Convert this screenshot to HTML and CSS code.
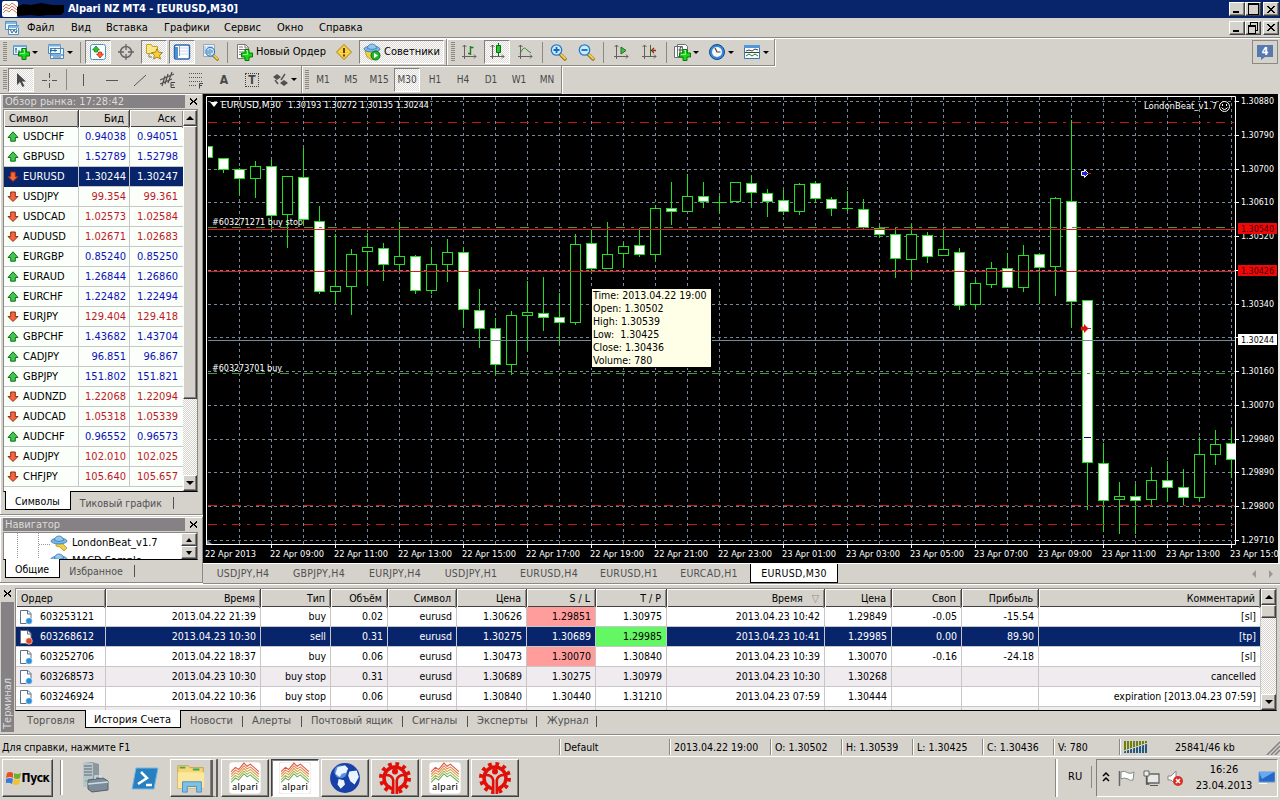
FILE: index.html
```html
<!DOCTYPE html>
<html lang="ru">
  <head>
    <meta charset="UTF-8" />
    <title>Alpari NZ MT4 - [EURUSD,M30]</title>
    <link rel="stylesheet" href="styles.css" />
  </head>
  <body>
    <svg class="sprite" aria-hidden="true">
      <symbol id="plus" viewBox="0 0 12 12">
        <path d="M4 .5h4V4h3.500v4H8v3.500H4V8H.5V4H4z" fill="#18d818" stroke="#087808" />
        <path d="M5 1.500h1.500v4H2" fill="none" stroke="#8f8" />
      </symbol>
      <symbol id="i-newchart" viewBox="0 0 18 18">
        <path d="M1.500 2.500h13v9h-13z" fill="#e8f4fc" stroke="#4888b8" />
        <path d="M1 3h14" stroke="#68a8d8" stroke-width="2" />
        <path d="M4 5v5M7 7v3M3 6h2M10 5v4" stroke="#286898" />
        <use href="#plus" x="6" y="5" width="12" height="12" />
      </symbol>
      <symbol id="i-profiles" viewBox="0 0 18 18">
        <path d="M3.500 5.500h13v10h-13zM1.500 1.500h12v9h-12z" fill="#f0f8ff" stroke="#4888c0" />
        <path d="M1 2.500h13M4 12h12" stroke="#78b0e0" stroke-width="2" />
        <path d="M4 5v4M3 7.500h7M8 5v4M6 14h8" stroke="#386890" />
      </symbol>
      <symbol id="i-market" viewBox="0 0 18 18">
        <rect x="1.500" y="1.500" width="15" height="15" rx="2" fill="#fff" stroke="#4898d0" />
        <path d="M7 3l3.500 4h-2v2h-3v-2h-2z" fill="#28c828" stroke="#087808" stroke-width=".7" />
        <path d="M11 15l-3.500-4h2v-2h3v2h2z" fill="#f86838" stroke="#b02008" stroke-width=".7" />
      </symbol>
      <symbol id="i-target" viewBox="0 0 18 18">
        <circle cx="9" cy="9" r="5.500" fill="none" stroke="#666" stroke-width="1.500" />
        <path d="M9 1v6M9 11v6M1 9h6M11 9h6" stroke="#666" stroke-width="1.300" />
      </symbol>
      <symbol id="star" viewBox="0 0 12 12">
        <path d="M6 .7l1.600 3.500 3.900.4-2.900 2.600.8 3.900L6 9.200l-3.400 1.900.8-3.900L.5 4.600l3.900-.4z" fill="#f8d030" stroke="#987010" stroke-width=".8" />
      </symbol>
      <symbol id="i-navigator" viewBox="0 0 18 18">
        <path d="M1.500 10.500v-9h5l1 2h5v7z" fill="#fce888" stroke="#c8a028" />
        <path d="M4 11v3h3" fill="none" stroke="#777" />
        <use href="#star" x="6" y="5" width="12" height="12" />
      </symbol>
      <symbol id="i-terminal" viewBox="0 0 18 18">
        <rect x="1.500" y="2" width="15" height="14" rx="1.500" fill="#fff" stroke="#2868b0" stroke-width="1.500" />
        <path d="M2 4h3v11H2z" fill="#4890d8" />
        <path d="M7 5h8M7 8h8M7 11h8" stroke="#c4d8ec" />
        <path d="M6 4h1M6 6h1M6 8h1M6 10h1M6 12h1" stroke="#345" />
      </symbol>
      <symbol id="lens" viewBox="0 0 18 18">
        <path d="M11 11l5 5" stroke="#987020" stroke-width="3.500" stroke-linecap="round" />
        <path d="M11.500 11l4.500 4.500" stroke="#f0d048" stroke-width="2" stroke-linecap="round" />
        <circle cx="7.500" cy="7" r="5.200" fill="#c8ecff" stroke="#2878c8" stroke-width="1.300" />
      </symbol>
      <symbol id="i-tester" viewBox="0 0 18 18">
        <path d="M2.500 1.500h11v12h-11z" fill="#f0f4f8" stroke="#98a8b8" />
        <path d="M4 3v8M6 4h6" stroke="#98b8d8" />
        <use href="#lens" x="3" y="3" width="15" height="15" />
        <path d="M7 7v4M9 6v6M11 7v3" stroke="#4870a8" />
      </symbol>
      <symbol id="i-order" viewBox="0 0 18 18">
        <path d="M2.500 1.500h8l3 3v11h-11z" fill="#fff" stroke="#777" />
        <path d="M10 1v4h4M4 4h4M4 6.500h7M4 9h6M4 11.500h4" fill="none" stroke="#777" />
        <use href="#plus" x="6" y="6" width="12" height="12" />
      </symbol>
      <symbol id="i-warn" viewBox="0 0 18 18">
        <path d="M9 1.500L16.500 9 9 16.500 1.500 9z" fill="#f8d040" stroke="#a88018" stroke-linejoin="round" />
        <path d="M9 5v5M9 11.500v2" stroke="#604000" stroke-width="2" />
      </symbol>
      <symbol id="hat" viewBox="0 0 18 18">
        <path d="M6 8l6 1 5 5-3 3-4-4-4-1z" fill="#f0d048" stroke="#b89020" stroke-width=".8" />
        <ellipse cx="9" cy="7" rx="8" ry="3" fill="#78b8e8" stroke="#3878b0" stroke-width=".8" />
        <path d="M4.500 6.500c0-6 9-6 9 0q-4.500 2-9 0z" fill="#90c8f0" stroke="#3878b0" stroke-width=".8" />
      </symbol>
      <symbol id="i-expert" viewBox="0 0 18 18">
        <path d="M2 8l2 6 5 3 6-4-1-5z" fill="#f0d048" stroke="#b89020" stroke-width=".8" />
        <ellipse cx="9" cy="6" rx="8" ry="3" fill="#78b8e8" stroke="#3878b0" stroke-width=".8" />
        <path d="M4.500 5.500c0-6 9-6 9 0q-4.500 2-9 0z" fill="#90c8f0" stroke="#3878b0" stroke-width=".8" />
        <circle cx="12.500" cy="12.500" r="4.500" fill="#20b828" stroke="#087010" />
        <path d="M11 10l4 2.500-4 2.500z" fill="#fff" />
      </symbol>
      <symbol id="axes" viewBox="0 0 18 18">
        <path d="M4.500 2v14M2 13.500h14M2.500 4l2-2 2 2M14 11.500l2 2-2 2" fill="none" stroke="#686060" />
      </symbol>
      <symbol id="i-bars" viewBox="0 0 18 18">
        <use href="#axes" width="18" height="18" />
        <path d="M10.500 3v9M8 10.500h2.500M10.500 4.500h3" fill="none" stroke="#188018" stroke-width="1.400" />
      </symbol>
      <symbol id="i-candles" viewBox="0 0 18 18">
        <use href="#axes" width="18" height="18" />
        <path d="M10.500 0v13" stroke="#087008" />
        <path d="M8.500 2.500h4v7h-4z" fill="#20c838" stroke="#087008" />
      </symbol>
      <symbol id="i-line" viewBox="0 0 18 18">
        <use href="#axes" width="18" height="18" />
        <path d="M4 11c3-7 5-7 7-4l4 3" fill="none" stroke="#388838" />
      </symbol>
      <symbol id="i-zoomin" viewBox="0 0 18 18">
        <use href="#lens" width="18" height="18" />
        <path d="M4.500 7h6M7.500 4v6" stroke="#1868b8" stroke-width="1.800" />
      </symbol>
      <symbol id="i-zoomout" viewBox="0 0 18 18">
        <use href="#lens" width="18" height="18" />
        <path d="M4.500 7h6" stroke="#1868b8" stroke-width="1.800" />
      </symbol>
      <symbol id="i-scroll" viewBox="0 0 18 18">
        <use href="#axes" width="18" height="18" />
        <path d="M9 4l5 3.500L9 11z" fill="#50b850" stroke="#187818" />
      </symbol>
      <symbol id="i-shift" viewBox="0 0 18 18">
        <use href="#axes" width="18" height="18" />
        <path d="M10.500 2v11" stroke="#207820" />
        <path d="M16 7.500h-4M14 5l-2.500 2.500L14 10" fill="none" stroke="#983020" stroke-width="1.300" />
      </symbol>
      <symbol id="i-indicator" viewBox="0 0 18 18">
        <path d="M1.500 3.500h8v11h-8zM4.500 1.500h8l2 2v10h-10z" fill="#fff" stroke="#687078" />
        <path d="M9 4q-2-1-2 2v5M5.500 7H9" fill="none" stroke="#444" />
        <use href="#plus" x="6" y="6" width="12" height="12" />
      </symbol>
      <symbol id="i-clock" viewBox="0 0 18 18">
        <circle cx="9" cy="9" r="7.500" fill="#3888d8" stroke="#0c4890" />
        <circle cx="9" cy="9" r="5" fill="#f4faff" />
        <path d="M7 5l2 4h3.500" fill="none" stroke="#604020" stroke-width="1.200" />
      </symbol>
      <symbol id="i-template" viewBox="0 0 18 18">
        <path d="M1.500 2.500h15v13h-15z" fill="#fff" stroke="#3878b0" />
        <path d="M1 3.500h16" stroke="#5098d8" stroke-width="3" />
        <path d="M3 8l3-1 3 1 3-2 3 1M2 9.500h14" fill="none" stroke="#345" />
        <path d="M3 13l3-2 3 2 3-2 3 2" fill="none" stroke="#287828" />
      </symbol>
      <symbol id="i-cursor" viewBox="0 0 18 18">
        <path d="M5 2v12l3-3 2.500 5 2-1L10 10.500h4z" fill="#484848" />
      </symbol>
      <symbol id="i-cross" viewBox="0 0 18 18">
        <path d="M9.500 2v5M9.500 12v5M2 9.500h5M12 9.500h5M9 9.500h1" stroke="#555" />
      </symbol>
      <symbol id="i-vline" viewBox="0 0 18 18"><path d="M8.500 3v12" stroke="#555" /></symbol>
      <symbol id="i-hline" viewBox="0 0 18 18"><path d="M3 9.500h12" stroke="#555" /></symbol>
      <symbol id="i-trend" viewBox="0 0 18 18"><path d="M3 15L15 4" stroke="#555" /></symbol>
      <symbol id="i-channel" viewBox="0 0 18 18">
        <path d="M1 9l14-6M1 13l12-5M3 15l3-10M6 13l3-10M9 12l4-11" stroke="#505050" stroke-width="1.200" />
        <path d="M16 11.500h-4v5h4M12 14h3" fill="none" stroke="#444" />
      </symbol>
      <symbol id="i-fibo" viewBox="0 0 18 18">
        <path d="M2 2.500h14M2 6.500h14M2 10.500h14M2 14.500h8" stroke="#555" stroke-dasharray="1 1" />
        <path d="M16 12.500h-3.500v5M12.500 14.500H15" fill="none" stroke="#444" />
      </symbol>
      <symbol id="i-arrows" viewBox="0 0 18 18">
        <path d="M2 6l4-3 4 3-4 3zM9 12l4-3 4 3-4 3z" fill="#505050" />
        <path d="M4 9l3 4M10 9l4-6" fill="none" stroke="#555" stroke-width="1.500" />
      </symbol>
      <symbol id="i-up" viewBox="0 0 12 12">
        <path d="M6 .8L11 6.500H8.300v3.700H3.700V6.500H1z" fill="#40c850" stroke="#107018" />
      </symbol>
      <symbol id="i-down" viewBox="0 0 12 12">
        <path d="M6 10.500L1 5.500h2.700V1h4.600v4.500H11z" fill="#f06840" stroke="#982810" />
      </symbol>
      <symbol id="doc" viewBox="0 0 14 16">
        <path d="M1.500 1.500h7.500l3 3v10H1.500z" fill="#fff" stroke="#607080" />
        <path d="M8.500 1.500v3.500H12" fill="none" stroke="#607080" />
      </symbol>
      <symbol id="i-alpari" viewBox="0 0 30 30">
        <rect width="30" height="30" rx="3" fill="#fff" stroke="#c8c8c8" stroke-width=".5" />
        <g fill="none" stroke-width="1">
          <path d="M2 9l4-4 3 2 5-6 3 3 3-2 8 7" stroke="#e05040" />
          <path d="M2 11.500l4-4 3 2 5-6 3 3 3-2 8 7" stroke="#e88048" />
          <path d="M2 14l4-4 3 2 5-6 3 3 3-2 8 7" stroke="#d8a048" />
          <path d="M2 16.500l4-4 3 2 5-6 3 3 3-2 8 7" stroke="#a8b850" />
          <path d="M2 19l4-4 3 2 5-6 3 3 3-2 8 7" stroke="#68b058" />
        </g>
        <text x="3" y="26" class="logo-text" textLength="24">alpari</text>
      </symbol>
      <symbol id="i-gear" viewBox="0 0 32 32">
        <circle cx="16" cy="16" r="14" fill="none" stroke="#e01008" stroke-width="4" stroke-dasharray="3.665 3.665" />
        <circle cx="16" cy="16" r="11" fill="none" stroke="#e01008" stroke-width="3.500" />
        <path d="M14 19h4v13h-4z" fill="#d5d2cc" />
        <circle cx="16" cy="9.500" r="3" fill="#e01008" />
        <path d="M7 13q6 0 7.200 5v14M25 13q-6 0-7.200 5v14" fill="none" stroke="#e01008" stroke-width="2.600" />
      </symbol>
    </svg>

    <header class="titlebar">
      <svg class="app-icon" viewBox="0 0 66 18">
        <rect x="2" y="1" width="16" height="16" rx="2" fill="#fff" />
        <path d="M3 7l3-3 3 2 3-3 5 4M3 10l3-3 3 2 3-3 5 4M3 13l3-3 3 2 3-3 5 4" fill="none" stroke="#d87850" />
        <path d="M17 7l6-3 8 1 10-2 12 2 11 0v7l-3 3-13 0-9 1-8-1-14 1v-4z" />
      </svg>
      <span>Alpari NZ MT4 - [EURUSD,M30]</span>
      <div class="winbtns">
        <button class="winbtn winbtn--min"></button><button class="winbtn winbtn--max"></button><button class="winbtn winbtn--close"></button>
      </div>
    </header>

    <nav class="menubar">
      <svg class="menubar__icon" viewBox="0 0 16 16">
        <path d="M1.500 1.500h11v8h-11zM4.500 5.500h10v9h-10z" fill="#f0f8ff" stroke="#5090c8" />
        <path d="M5 7h10M2 3h10" stroke="#88b8e0" stroke-width="2" /><path d="M6 9l2 4 2-3 2 3 1-3" fill="none" stroke="#467" />
      </svg>
      <span class="m1">Файл</span><span class="m2">Вид</span><span class="m3">Вставка</span><span class="m4">Графики</span>
      <span class="m5">Сервис</span><span class="m6">Окно</span><span class="m7">Справка</span>
      <div class="winbtns">
        <button class="winbtn winbtn--min"></button><button class="winbtn winbtn--restore"></button><button class="winbtn winbtn--close"></button>
      </div>
    </nav>

    <div class="toolbars">
      <div class="toolbar">
        <div class="band band--main">
          <i class="grip"></i>
          <a class="tb tb--drop"><svg><use href="#i-newchart" /></svg></a>
          <a class="tb tb--drop"><svg><use href="#i-profiles" /></svg></a>
          <i class="sep"></i>
          <a class="tb tb--on"><svg><use href="#i-market" /></svg></a>
          <a class="tb"><svg><use href="#i-target" /></svg></a>
          <a class="tb tb--on"><svg><use href="#i-navigator" /></svg></a>
          <a class="tb tb--on"><svg><use href="#i-terminal" /></svg></a>
          <a class="tb"><svg><use href="#i-tester" /></svg></a>
          <i class="sep"></i>
          <a class="tb tb--order"><svg><use href="#i-order" /></svg><span>Новый Ордер</span></a>
          <a class="tb"><svg><use href="#i-warn" /></svg></a>
          <a class="tb tb--on tb--expert"><svg><use href="#i-expert" /></svg><span>Советники</span></a>
        </div>
        <div class="band band--charts">
          <i class="grip"></i>
          <a class="tb"><svg><use href="#i-bars" /></svg></a>
          <a class="tb tb--on"><svg><use href="#i-candles" /></svg></a>
          <a class="tb"><svg><use href="#i-line" /></svg></a>
          <i class="sep sep--thin"></i>
          <a class="tb"><svg><use href="#i-zoomin" /></svg></a>
          <a class="tb"><svg><use href="#i-zoomout" /></svg></a>
          <i class="sep"></i>
          <a class="tb"><svg><use href="#i-scroll" /></svg></a>
          <a class="tb"><svg><use href="#i-shift" /></svg></a>
          <i class="sep sep--thin"></i>
          <a class="tb tb--drop"><svg><use href="#i-indicator" /></svg></a>
          <a class="tb tb--drop"><svg><use href="#i-clock" /></svg></a>
          <a class="tb tb--drop"><svg><use href="#i-template" /></svg></a>
        </div>
        <div class="notice"><span>4</span></div>
      </div>
      <div class="toolbar toolbar--second">
        <div class="band band--draw">
          <i class="grip"></i>
          <a class="tb tb--on"><svg><use href="#i-cursor" /></svg></a>
          <a class="tb"><svg><use href="#i-cross" /></svg></a>
          <i class="sep"></i>
          <a class="tb"><svg><use href="#i-vline" /></svg></a>
          <a class="tb"><svg><use href="#i-hline" /></svg></a>
          <a class="tb"><svg><use href="#i-trend" /></svg></a>
          <a class="tb"><svg><use href="#i-channel" /></svg></a>
          <a class="tb"><svg><use href="#i-fibo" /></svg></a>
          <a class="tb tb--glyph">A</a>
          <a class="tb tb--glyph tb--label">T</a>
          <a class="tb tb--drop"><svg><use href="#i-arrows" /></svg></a>
        </div>
        <div class="band band--period">
          <i class="grip"></i>
          <a class="tb">M1</a><a class="tb">M5</a><a class="tb">M15</a><a class="tb tb--on">M30</a><a class="tb">H1</a>
          <a class="tb">H4</a><a class="tb">D1</a><a class="tb">W1</a><a class="tb">MN</a>
        </div>
      </div>
    </div>

    <main class="main">
      <aside class="side">
        <section class="panel panel--market">
          <div class="panel__head"><span>Обзор рынка: 17:28:42</span><b class="x"></b></div>
          <div class="panel__body">
            <div class="quotes">
              <div class="quote quote--head"><span>Символ</span><span>Бид</span><span>Аск</span></div>
              <div id="quotes"></div>
            </div>
            <div class="scroll"><i class="scroll__up"></i><i class="scroll__thumb"></i><i class="scroll__down"></i></div>
          </div>
          <div class="tabs"><span class="tab tab--on">Символы</span><span class="tab">Тиковый график</span></div>
        </section>
        <section class="panel panel--nav">
          <div class="panel__head"><span>Навигатор</span><b class="x"></b></div>
          <div class="panel__body">
            <div class="tree">
              <div class="tree__item"><svg><use href="#hat" /></svg>LondonBeat_v1.7</div>
              <div class="tree__item"><svg><use href="#hat" /></svg>MACD Sample</div>
            </div>
            <div class="scroll"><i class="scroll__up"></i><i class="scroll__down"></i></div>
          </div>
          <div class="tabs"><span class="tab tab--on">Общие</span><span class="tab">Избранное</span></div>
        </section>
      </aside>
      <section class="workspace">
        <div class="chart">
          <svg id="chart" viewBox="204 94 1074 469"></svg>
          <div class="tip">
            <div>Time: 2013.04.22 19:00</div><div>Open: 1.30502</div><div>High: 1.30539</div>
            <div>Low: &nbsp;1.30425</div><div>Close: 1.30436</div><div>Volume: 780</div>
          </div>
        </div>
        <div class="chart-tabs">
          <span>USDJPY,H4</span><span>GBPJPY,H4</span><span>EURJPY,H4</span><span>USDJPY,H1</span>
          <span class="wide">EURUSD,H4</span><span class="wide">EURUSD,H1</span><span class="wide">EURCAD,H1</span><span class="on">EURUSD,M30</span>
          <svg class="chart-tabs__nav" viewBox="0 0 24 8"><path d="M5 0v8L1 4zM18 0v8l4-4z" fill="#999" /></svg>
        </div>
      </section>
    </main>

    <section class="terminal">
      <div class="terminal__strip"><b class="x"></b><span>Терминал</span></div>
      <div class="terminal__content">
        <div class="terminal__body">
          <div class="orders" id="orders">
            <div class="order order--head">
              <span>Ордер</span><span>Время</span><span>Тип</span><span>Объём</span><span>Символ</span><span>Цена</span><span>S / L</span>
              <span>T / P</span><span>Время &nbsp; <i>▽</i></span><span>Цена</span><span>Своп</span><span>Прибыль</span><span>Комментарий</span>
            </div>
          </div>
          <div class="scroll"><i class="scroll__up"></i><i class="scroll__thumb"></i><i class="scroll__down"></i></div>
        </div>
        <div class="term-tabs">
          <span class="t1">Торговля</span><span class="t2 on">История Счета</span><span class="t3">Новости</span><span class="t4">Алерты</span>
          <span class="t5">Почтовый ящик</span><span class="t6">Сигналы</span><span class="t7">Эксперты</span><span class="t8">Журнал</span>
        </div>
      </div>
    </section>

    <footer class="status">
      <span class="s0">Для справки, нажмите F1</span><span class="s1">Default</span><span class="s2">2013.04.22 19:00</span>
      <span class="s3">O: 1.30502</span><span class="s3">H: 1.30539</span><span class="s4">L: 1.30425</span><span class="s5">C: 1.30436</span><span class="s6">V: 780</span>
      <span class="s7"><svg class="signal" viewBox="0 0 24 12">
        <path d="M0 6h24" stroke="#6f8010" stroke-width="12" />
        <path d="M0 12v-2L24 2v10z" fill="#245880" /><path d="M0 10L24 2" stroke="#ddd" stroke-width="1" />
        <path d="M2.500 0v12M5.500 0v12M8.500 0v12M11.500 0v12M14.500 0v12M17.500 0v12M20.500 0v12M23.500 0v12" stroke="#d4d0c8" />
      </svg></span>
      <span class="s8">25841/46 kb</span>
      <svg class="resize" viewBox="0 0 14 14"><path d="M1 14L14 1M5 14l9-9M9 14l5-5" stroke="#808080" stroke-width="1.500" /></svg>
    </footer>

    <footer class="taskbar">
      <button class="start">
        <svg viewBox="0 0 16 16"><path d="M1 3q3-2 6 0v5q-3-2-7 0z" fill="#e85020" /><path d="M8 3q3 2 7 0l-1 5q-3 2-6 0z" fill="#70b028" /><path d="M0 9q4-2 7 0l-1 5q-3-2-6-1z" fill="#3878d8" /><path d="M8 9q3 2 6 0l-1 5q-3 2-6 0z" fill="#f8c020" /></svg>
        Пуск
      </button>
      <i class="divider"></i>
      <svg class="quick quick--server" viewBox="0 0 30 32">
        <path d="M3 2l9-1 7 2v22H3z" fill="#8c98a0" /><path d="M3 2h10v24H3z" fill="#b8c4cc" />
        <path d="M4 5h8M4 8h8M4 11h8M4 14h8" stroke="#586870" /><circle cx="6" cy="20" r="1" fill="#6c6" />
        <path d="M8 19l15-2 5 3v9l-16 2-4-3z" fill="#7c8c98" stroke="#546068" /><path d="M8 23l20-2M15 18v-3h6v2" fill="none" stroke="#d0dce4" stroke-width="1.500" />
      </svg>
      <svg class="quick quick--shell" viewBox="0 0 28 24">
        <path d="M5 1h22l-4 21H1z" fill="#2880c0" stroke="#78b8e0" /><path d="M10 5l6 6-9 6M15 18h6" fill="none" stroke="#fff" stroke-width="2.500" />
      </svg>
      <button class="task task--stack">
        <svg viewBox="0 0 34 32"><path d="M3 3h11l2 2h14v22H3z" fill="#f4d878" stroke="#c8a040" /><path d="M5 5h6M19 7h7" stroke="#40a850" stroke-width="2" /><path d="M3 10h28v17H3z" fill="#fce89c" /><path d="M8 31V20h20v11h-5v-6H13v6z" fill="#80c0e8" stroke="#4890c0" /></svg>
      </button>
      <button class="task"><svg><use href="#i-alpari" /></svg></button>
      <button class="task task--on"><svg><use href="#i-alpari" /></svg></button>
      <button class="task">
        <svg viewBox="0 0 30 30"><circle cx="15" cy="15" r="14" fill="#1840a8" /><circle cx="11" cy="9" r="6" fill="#78b0f0" opacity=".7" /><path d="M8 5l7-2 3 3-2 4-4 1-2 3-4-3zM19 9l7-1 2 6-4 7-4-3-2-5zM9 16l5 1 1 4-4 4-3-4z" fill="#e8f4ff" /></svg>
      </button>
      <button class="task"><svg><use href="#i-gear" /></svg></button>
      <button class="task"><svg><use href="#i-alpari" /></svg></button>
      <button class="task"><svg><use href="#i-gear" /></svg></button>
      <div class="tray">
        <span class="lang">RU</span>
        <div class="tray__box">
          <svg class="tray__icons" viewBox="0 0 84 20">
            <path d="M2 8l3-3 3 3M2 13l3-3 3 3" fill="none" stroke="#000" stroke-width="1.500" />
            <path d="M18.500 3v15" stroke="#666" stroke-width="1.500" /><path d="M20 4q4-2 7 1 3 1 6-1l-1 8q-3 1-5-1-4-2-7 0z" fill="#fff" stroke="#888" />
            <path d="M46 6h12v9H46z" fill="#e8e8e8" stroke="#666" stroke-width="1.300" /><path d="M49 17.500h8" stroke="#555" />
            <path d="M43 3h5v5h-5z" fill="#eee" stroke="#666" /><path d="M45.500 8v8h3" fill="none" stroke="#555" stroke-width="1.300" />
            <path d="M67 8h3l5-5v14l-5-5h-3z" fill="#fff" stroke="#888" /><circle cx="77" cy="13" r="5" fill="#d83028" /><path d="M75 11l4 4M79 11l-4 4" stroke="#fff" stroke-width="1.500" />
          </svg>
          <div class="clock"><div>16:26</div><div>23.04.2013</div></div>
          <svg class="desk" viewBox="0 0 17 14"><path d="M1 1h16v10H1z" fill="#2468c8" stroke="#6898c8" /><path d="M1 1h15L4 8z" fill="#68a8f0" /><path d="M1 12.500h8" stroke="#fff" /></svg>
        </div>
      </div>
    </footer>
    <script src="terminal.js"></script>
  </body>
</html>
```
FILE: styles.css
```css
* {
  box-sizing: border-box;
}

body {
  margin: 0;
  width: 1280px;
  height: 800px;
  overflow: hidden;
  display: flex;
  flex-direction: column;
  background: #d5d2cc;
  color: #000;
  font-family: 'DejaVu Sans Condensed', 'DejaVu Sans', sans-serif;
  font-stretch: condensed;
  font-size: 10.5px;
  line-height: 14px;
  white-space: nowrap;
}

i {
  font-style: normal;
}

button {
  font: inherit;
  color: inherit;
  padding: 0;
}

svg {
  flex: none;
  display: block;
}

.sprite {
  position: absolute;
  width: 0;
  height: 0;
}

/* title and menu */
.titlebar {
  height: 18px;
  flex: none;
  display: flex;
  align-items: center;
  background: #08246b;
  color: #fff;
  font-weight: bold;
  font-size: 11px;
  letter-spacing: -.08px;
  padding-right: 1px;
}

.app-icon {
  width: 66px;
  height: 18px;
  margin-right: 2px;
}

.winbtns {
  margin-left: auto;
  display: flex;
}

.winbtn {
  width: 16px;
  height: 14px;
  background: #d5d2cc;
  border: 1px solid;
  border-color: #fff #404040 #404040 #fff;
  box-shadow: inset -1px -1px #808080;
  display: flex;
  align-items: center;
  justify-content: center;
}

.winbtn--close {
  margin-left: 2px;
}

.winbtn--min::before {
  content: '';
  width: 6px;
  height: 2px;
  margin: 6px 3px 0 0;
  background: #000;
}

.winbtn--max::before {
  content: '';
  width: 9px;
  height: 9px;
  border: 1px solid #000;
  border-top-width: 2px;
}

.winbtn--restore::before {
  content: '';
  width: 6px;
  height: 6px;
  margin: 3px 2px 0 0;
  border: 1px solid #000;
  border-top-width: 2px;
  box-shadow: 2px -3px 0 -1px #d5d2cc, 2px -3px #000;
}

.winbtn--close::before,
.x::before {
  content: '';
  width: 8px;
  height: 7px;
  background: linear-gradient(41deg, transparent 43%, #000 43% 57%, transparent 57%),
    linear-gradient(-41deg, transparent 43%, #000 43% 57%, transparent 57%);
}

.menubar {
  height: 20px;
  flex: none;
  display: flex;
  align-items: center;
  padding: 0 1px 0 4px;
  font-size: 11px;
  border-bottom: 1px solid #8c8984;
}

.menubar__icon {
  width: 16px;
  height: 16px;
  margin-right: 7px;
}

.m1 { width: 44px; }
.m2 { width: 35px; }
.m3 { width: 58px; }
.m4 { width: 60px; }
.m5 { width: 53px; }
.m6 { width: 42px; }

/* toolbars */
.toolbars {
  height: 56px;
  flex: none;
  border-top: 1px solid #fff;
}

.toolbar {
  height: 27px;
  display: flex;
}

.toolbar--second {
  height: 28px;
}

.band {
  display: flex;
  align-items: center;
  border: solid #8c8984;
  border-width: 0 1px 1px 0;
  box-shadow: inset 0 1px #fff, 1px 1px #fff;
}

.band--main { width: 447px; padding-left: 3px; }
.band--charts { width: 328px; padding-left: 4px; }
.band--draw { width: 302px; padding-left: 3px; }
.band--period { width: 260px; padding-left: 3px; }

.band--period .tb,
.tb--glyph {
  color: #484848;
  font-size: 10px;
}

.grip {
  width: 4px;
  height: 20px;
  flex: none;
  background: repeating-linear-gradient(#8c8984 0 1px, transparent 1px 2px);
}

.sep {
  width: 7px;
  height: 21px;
  flex: none;
  background: linear-gradient(#8c8984, #8c8984) 3px 0 / 1px 100% no-repeat;
}

.sep--thin {
  width: 5px;
}

.tb {
  width: 26px;
  height: 24px;
  margin: 0 1px;
  flex: none;
  display: flex;
  align-items: center;
  justify-content: center;
  border: 1px solid transparent;
}

.tb svg {
  width: 18px;
  height: 18px;
}

.tb--on {
  border-color: #808080 #fff #fff #808080;
  background: repeating-conic-gradient(#fff 0 25%, #dcd9d4 0 50%) 0 0 / 2px 2px;
}

.tb--drop {
  width: 33px;
}

.tb--drop::after {
  content: '';
  border: 3px solid transparent;
  border-top-color: #000;
  border-bottom: 0;
  margin-left: 2px;
}

.tb--order {
  width: 97px;
}

.tb--order span {
  margin-left: 3px;
  font-size: 11px;
}

.tb--expert {
  width: 85px;
  font-size: 11px;
}

.tb--expert span {
  margin-left: 3px;
}

.tb--glyph {
  font-weight: bold;
  font-size: 12px;
}

.tb--label {
  width: 14px;
  height: 14px;
  margin: 0 7px;
  border: 1px dotted #444;
}

.notice {
  width: 26px;
  height: 24px;
  margin: 1px 2px 0 auto;
  border: 1px solid #8c8984;
  display: flex;
  justify-content: center;
  padding-top: 4px;
}

.notice span {
  width: 16px;
  height: 12px;
  line-height: 12px;
  background: #5878b0;
  color: #fff;
  font-weight: bold;
  text-align: center;
}

.notice span::after {
  content: '';
  display: block;
  width: 0;
  margin-left: 4px;
  border: solid transparent;
  border-width: 3px 4px 0 0;
  border-top-color: #5878b0;
}

/* side panels */
.main {
  height: 490px;
  flex: none;
  display: flex;
}

.side {
  width: 203px;
  display: flex;
  flex-direction: column;
}

.panel {
  padding: 1px 4px 0 3px;
  border: solid #8c8984;
  border-width: 0 1px 1px 0;
  box-shadow: inset 1px 1px #fff, 0 1px #fff;
  display: flex;
  flex-direction: column;
}

.panel--market { height: 421px; }
.panel--nav { height: 66px; margin-top: 2px; }

.panel__head {
  height: 13px;
  flex: none;
  width: 182px;
  background: #848284;
  color: #dedbd6;
  padding-left: 2px;
  font-size: 11px;
  line-height: 13px;
  display: flex;
  justify-content: space-between;
}

.panel--market .panel__head { letter-spacing: .05px; }

.x {
  margin: 3px -12px 0 0;
}

.x::before {
  display: block;
  width: 7px;
}

.panel__body {
  margin-top: 1px;
  border: 1px solid #8c8984;
  border-bottom: 1px solid #000;
  display: flex;
  flex: 1;
  min-height: 0;
  overflow: hidden;
}

.quotes {
  width: 179px;
  background: #fafffa;
}

.quote {
  height: 20px;
  display: grid;
  grid-template-columns: 75px 51px 53px;
  border-bottom: 1px solid #c6c7c6;
  font-size: 11px;
  line-height: 20px;
}

.quote span {
  text-align: right;
  padding-right: 3px;
  border-right: 1px solid #c6c7c6;
}

.quote span:first-child {
  text-align: left;
  padding-left: 3px;
  display: flex;
  color: #000;
}

.quote span:last-child {
  border: 0;
  padding-right: 5px;
}

.quote svg {
  width: 12px;
  height: 12px;
  margin: 4px 4px 0 0;
}

.quote--head {
  height: 17px;
  background: #d5d2cc;
  line-height: 18px;
  border-color: #404040;
}

.quote--head span {
  border-right: 1px solid #404040;
  box-shadow: inset 1px 1px #fff, inset -1px 0 #8c8984;
}

.quote--head span:first-child { padding-left: 5px; }
.quote--head span:nth-child(2) { padding-right: 5px; }
.quote--head span:last-child { padding-right: 7px; }

.quote--up { color: #1010b8; }
.quote--down { color: #c01828; }

.quote--on,
.quote--on span:first-child {
  background: #08246b;
  color: #fff;
}

.scroll {
  width: 16px;
  display: flex;
  flex-direction: column;
  background: repeating-conic-gradient(#fff 0 25%, #d5d2cc 0 50%) 0 0 / 2px 2px;
}

.scroll__up,
.scroll__down,
.scroll__thumb {
  height: 16px;
  background: #d5d2cc;
  border: 1px solid;
  border-color: #fff #404040 #404040 #fff;
  box-shadow: inset -1px -1px #808080;
  display: flex;
  align-items: center;
  justify-content: center;
}

.scroll__thumb { height: 273px; }
.scroll__down { margin-top: auto; }

.scroll__up::before,
.scroll__down::before {
  content: '';
  border: 4px solid transparent;
  border-bottom-color: #000;
  border-top: 0;
}

.scroll__down::before {
  border: 4px solid transparent;
  border-top-color: #000;
  border-bottom: 0;
}

.panel--nav .scroll > i { height: 13px; }
.panel--nav .scroll i::before { border-left-width: 3px; border-right-width: 3px; }

.tabs {
  height: 22px;
  flex: none;
  display: flex;
  color: #505050;
}

.tab {
  padding: 4px 12px 0 9px;
}

.tab:last-child::after {
  content: '';
  border-right: 1px solid #505050;
  margin-left: 11px;
}

.tab--on {
  height: 19px;
  margin: -1px 0 0 2px;
  padding: 3px 10px 0 9px;
  background: #fff;
  color: #000;
  border: solid #000;
  border-width: 0 1px 1px;
  position: relative;
}

.tree {
  width: 179px;
  background: #fff;
  background-image: repeating-linear-gradient(#999 0 1px, transparent 1px 2px), repeating-linear-gradient(#999 0 1px, transparent 1px 2px),
    repeating-linear-gradient(90deg, #999 0 1px, transparent 1px 2px);
  background-size: 1px 100%, 1px 100%, 12px 1px;
  background-repeat: no-repeat;
  background-position: 13px 0, 34px 0, 35px 11px;
}

.tree__item {
  height: 18px;
  display: flex;
  align-items: center;
  padding-left: 46px;
  font-size: 11px;
}

.tree__item:first-child {
  height: 19px;
  padding-top: 1px;
}

.tree__item svg {
  width: 18px;
  height: 18px;
  margin-right: 4px;
}

/* chart */
.workspace {
  flex: 1;
  min-width: 0;
}

.chart {
  height: 470px;
  background: #000;
  position: relative;
  border-right: 2px solid #e8e6e2;
  padding-left: 1px;
  border-bottom: 1px solid #fff;
}

.chart > svg {
  width: 1074px;
  height: 469px;
}

.chart text {
  font-size: 9.5px;
}

.tip {
  position: absolute;
  left: 388px;
  top: 194px;
  width: 121px;
  height: 80px;
  padding-left: 1px;
  background: #ffffe7;
  border: 1px solid #000;
  line-height: 13px;
}

.chart-tabs {
  height: 20px;
  display: flex;
  align-items: flex-start;
  padding-left: 2px;
  border-bottom: 1px solid #8c8984;
  color: #505050;
  letter-spacing: .25px;
}

.chart-tabs span {
  width: 76px;
  height: 19px;
  text-align: center;
  padding-top: 2px;
}

.chart-tabs .wide { width: 80px; }

.chart-tabs .on {
  width: 88px;
  margin-left: 1px;
  background: #fff;
  color: #000;
  border: solid #000;
  border-width: 0 1px 1px;
}

.chart-tabs__nav {
  width: 24px;
  height: 8px;
  margin: 6px 5px 0 auto;
}

/* terminal */
.terminal {
  height: 151px;
  flex: none;
  display: flex;
  border: solid #8c8984;
  border-width: 0 0 1px;
  box-shadow: inset 0 1px #fff, 0 1px #fff;
}

.terminal__strip {
  width: 15px;
  padding: 6px 0 0 1px;
}

.terminal__strip .x {
  display: block;
  margin: 0 0 5px 3px;
}

.terminal__strip span {
  display: block;
  width: 13px;
  height: 130px;
  background: #848284;
  color: #dedbd6;
  writing-mode: vertical-rl;
  transform: rotate(180deg);
  font-size: 11px;
  line-height: 13px;
  padding-top: 3px;
}

.terminal__content {
  flex: 1;
  padding-top: 4px;
}

.terminal__body {
  width: 1262px;
  height: 123px;
  border: 1px solid #8c8984;
  border-bottom: 1px solid #000;
  overflow: hidden;
  display: flex;
}

.terminal__body .scroll__thumb { height: 13px; }

.orders {
  width: 1245px;
  background: #fff;
}

.order {
  height: 20px;
  display: grid;
  grid-template-columns: 90px 155px 70px 57px 69px 70px 69px 71px 158px 67px 70px 77px 222px;
  border-bottom: 1px solid #c6c7c6;
  line-height: 19px;
}

.order span {
  text-align: right;
  padding-right: 4px;
  border-right: 1px solid #c6c7c6;
}

.order span:first-child {
  display: flex;
  align-items: center;
}

.order svg {
  width: 14px;
  height: 16px;
  margin: 0 7px 0 3px;
}

.order--head {
  height: 18px;
  background: #d5d2cc;
  border-color: #404040;
}

.order--head span {
  border-color: #404040;
  padding-right: 5px;
  box-shadow: inset 1px 1px #fff, inset -1px 0 #8c8984;
}

.order--head span:first-child { padding-left: 5px; }
.order--head i { color: #888; }
.order--odd { background: #efebef; }
.order--on { background: #08246b; color: #fff; }
.order .hit-sl { background: #ff9c9c; color: #000; }
.order .hit-tp { background: #63f763; color: #000; }

.term-tabs {
  display: flex;
  color: #505050;
  font-size: 11px;
}

.term-tabs span {
  padding-top: 3px;
  height: 18px;
}

.t1 { width: 70px; padding-left: 12px; }
.t2 { width: 96px; padding-left: 8px; }
.t3 { width: 62px; padding-left: 9px; }
.t4 { width: 59px; padding-left: 9px; }
.t5 { width: 101px; padding-left: 9px; }
.t6 { width: 65px; padding-left: 9px; }
.t7 { width: 69px; padding-left: 9px; }
.t8 { width: 60px; padding-left: 10px; }

.term-tabs span:nth-child(n + 3) {
  background: linear-gradient(#505050, #505050) 100% 5px / 1px 11px no-repeat;
}

.term-tabs .on {
  margin-top: -1px;
  background: #fff;
  color: #000;
  border: solid #000;
  border-width: 0 1px 1px;
  position: relative;
}

/* status bar */
.status {
  height: 22px;
  flex: none;
  display: flex;
  align-items: center;
  border-bottom: 1px solid #fff;
  padding: 2px 0 0 2px;
}

.status span {
  height: 16px;
  line-height: 16px;
  padding-left: 4px;
  border-left: 1px solid #8c8984;
  box-shadow: inset 1px 0 #fff;
}

.status .s0 { width: 557px; padding-left: 0; border: 0; box-shadow: none; }
.s1 { width: 110px; }
.s2 { width: 101px; }
.s3 { width: 71px; }
.s4 { width: 70px; }
.s5 { width: 71px; }
.s6 { width: 66px; }
.s7 { width: 41px; }
.status .s8 { width: 100px; padding-left: 15px; border: 0; box-shadow: none; }

.signal {
  width: 24px;
  height: 12px;
  margin-top: 2px;
}

.resize {
  width: 14px;
  height: 14px;
  margin: 3px 0 0 auto;
}

/* taskbar */
.taskbar {
  flex: 1;
  display: flex;
  align-items: flex-start;
  padding-top: 2px;
  min-height: 0;
}

.start,
.task {
  background: #d5d2cc;
  border: 1px solid;
  border-color: #fff #404040 #404040 #fff;
  box-shadow: inset -1px -1px #808080;
  height: 38px;
  display: flex;
  align-items: center;
  justify-content: center;
}

.start {
  width: 51px;
  margin-left: 2px;
  font-weight: bold;
  font-size: 12px;
  letter-spacing: -.5px;
}

.start svg {
  width: 16px;
  height: 16px;
}

.divider {
  width: 3px;
  height: 35px;
  margin: 1px 17px 0 7px;
  border-left: 1px solid #8c8984;
  border-right: 2px solid #fff;
}

.quick--server {
  width: 30px;
  height: 32px;
  margin: 2px 21px 0 0;
}

.quick--shell {
  width: 28px;
  height: 24px;
  margin: 8px 11px 0 0;
}

.task {
  width: 48px;
  margin-right: 2px;
}

.task svg {
  width: 32px;
  height: 32px;
}

.task--stack {
  margin-right: 3px;
  border-right: 7px double #606060;
}

.task--on {
  background: #fff;
  border-color: #404040 #fff #fff #404040;
  box-shadow: inset 1px 1px #808080;
}

.logo-text {
  font-family: Lato, sans-serif;
  font-size: 9px;
}

.tray {
  margin-left: auto;
  display: flex;
  height: 38px;
  border-left: 1px solid #8c8984;
  box-shadow: inset 2px 0 #fff;
}

.lang {
  width: 24px;
  margin: 7px 4px 0 12px;
  height: 22px;
  line-height: 22px;
  border-right: 1px solid #8c8984;
  font-size: 11px;
}

.tray__box {
  width: 182px;
  margin-right: 2px;
  border: 1px solid;
  border-color: #808080 #fff #fff #808080;
  display: flex;
  align-items: center;
}

.tray__icons {
  width: 84px;
  height: 20px;
  margin-left: 4px;
}

.clock {
  width: 60px;
  margin-left: 9px;
  text-align: center;
  font-size: 11px;
  line-height: 16px;
}

.desk {
  width: 17px;
  height: 14px;
  margin-left: 4px;
}
```
FILE: terminal.js
```js
const quotes = [
  ['USDCHF', '0.94038', '0.94051', 'up'],
  ['GBPUSD', '1.52789', '1.52798', 'up'],
  ['EURUSD', '1.30244', '1.30247', 'down', 'on'],
  ['USDJPY', '99.354', '99.361', 'down'],
  ['USDCAD', '1.02573', '1.02584', 'down'],
  ['AUDUSD', '1.02671', '1.02683', 'down'],
  ['EURGBP', '0.85240', '0.85250', 'up'],
  ['EURAUD', '1.26844', '1.26860', 'up'],
  ['EURCHF', '1.22482', '1.22494', 'up'],
  ['EURJPY', '129.404', '129.418', 'down'],
  ['GBPCHF', '1.43682', '1.43704', 'up'],
  ['CADJPY', '96.851', '96.867', 'up'],
  ['GBPJPY', '151.802', '151.821', 'up'],
  ['AUDNZD', '1.22068', '1.22094', 'down'],
  ['AUDCAD', '1.05318', '1.05339', 'down'],
  ['AUDCHF', '0.96552', '0.96573', 'up'],
  ['AUDJPY', '102.010', '102.025', 'down'],
  ['CHFJPY', '105.640', '105.657', 'down']
]
document.querySelector('#quotes').innerHTML = quotes
  .map(([name, bid, ask, dir, on]) =>
    `<div class="quote quote--${dir} ${on ? 'quote--on' : ''}"><span><svg><use href="#i-${dir}"/></svg>${name}</span><span>${bid}</span><span>${ask}</span></div>`)
  .join('')

const orders = [
  ['603253121', '2013.04.22 21:39', 'buy', '0.02', 'eurusd', '1.30626', '1.29851', '1.30975', '2013.04.23 10:42', '1.29849', '-0.05', '-15.54', '[sl]'],
  ['603268612', '2013.04.23 10:30', 'sell', '0.31', 'eurusd', '1.30275', '1.30689', '1.29985', '2013.04.23 10:41', '1.29985', '0.00', '89.90', '[tp]'],
  ['603252706', '2013.04.22 18:37', 'buy', '0.06', 'eurusd', '1.30473', '1.30070', '1.30840', '2013.04.23 10:39', '1.30070', '-0.16', '-24.18', '[sl]'],
  ['603268573', '2013.04.23 10:30', 'buy stop', '0.31', 'eurusd', '1.30689', '1.30275', '1.30979', '2013.04.23 10:30', '1.30268', '', '', 'cancelled'],
  ['603246924', '2013.04.22 10:36', 'buy stop', '0.06', 'eurusd', '1.30840', '1.30440', '1.31210', '2013.04.23 07:59', '1.30444', '', '', 'expiration [2013.04.23 07:59]'],
  ['', '', '', '', '', '', '', '', '', '', '', '', '']
]
document.querySelector('#orders').innerHTML += orders
  .map((row, r) => {
    const dot = row[2] === 'sell' ? '#e04820' : '#2890d8'
    const cells = row.map((v, c) => {
      if (c === 0) {
        return `<span><svg viewBox="0 0 14 16"><use href="#doc"/><circle cx="10" cy="12" r="3.300" fill="${dot}" stroke="#fff" stroke-width=".6"/></svg>${v}</span>`
      }
      const hit = c === 6 && row[12] === '[sl]' ? 'hit-sl' : c === 7 && row[12] === '[tp]' ? 'hit-tp' : ''
      return `<span class="${hit}">${v}</span>`
    })
    return `<div class="order ${r === 1 ? 'order--on' : r % 2 ? 'order--odd' : ''}">${cells.join('')}</div>`
  })
  .join('')

// candles: high, body top, body bottom, low, 1 = falling (filled)
const candles = [
  [146, 146, 157, 160, 1], [158, 158, 169, 172, 1], [168, 169, 178, 194, 1], [161, 166, 178, 197, 0],
  [160, 166, 215, 229, 1], [176, 176, 214, 247, 0], [148, 177, 219, 224, 1], [206, 221, 291, 293, 1],
  [234, 286, 291, 303, 0], [249, 254, 286, 314, 0], [233, 247, 251, 285, 0], [243, 248, 264, 280, 1],
  [222, 256, 264, 270, 0], [255, 256, 290, 293, 1], [247, 264, 290, 293, 0], [239, 252, 264, 281, 0],
  [247, 252, 309, 326, 1], [289, 310, 328, 347, 1], [318, 328, 364, 374, 1], [311, 315, 364, 374, 0],
  [281, 312, 315, 350, 0], [277, 313, 317, 330, 1], [293, 317, 322, 344, 1], [234, 244, 322, 324, 0],
  [230, 243, 268, 270, 1], [222, 254, 268, 268, 0], [243, 246, 253, 267, 0], [228, 245, 254, 256, 1],
  [205, 208, 254, 260, 0], [182, 208, 211, 224, 1], [174, 196, 211, 211, 0], [182, 196, 201, 207, 1],
  [196, 202, 202, 212, 0], [182, 182, 201, 201, 0], [175, 183, 192, 206, 1], [189, 193, 201, 216, 1],
  [190, 200, 211, 214, 1], [183, 184, 211, 214, 0], [181, 183, 198, 202, 1], [197, 199, 208, 215, 1],
  [191, 208, 208, 210, 0], [199, 209, 227, 228, 1], [226, 228, 234, 237, 1], [228, 234, 258, 277, 1],
  [224, 234, 259, 279, 0], [232, 235, 256, 262, 1], [228, 249, 255, 255, 0], [248, 252, 305, 309, 1],
  [280, 283, 304, 308, 0], [262, 268, 284, 287, 0], [253, 268, 287, 287, 1], [245, 255, 287, 291, 0],
  [253, 254, 267, 303, 1], [197, 198, 266, 295, 0], [120, 201, 301, 326, 1], [300, 300, 462, 509, 1],
  [443, 463, 500, 531, 1], [482, 496, 499, 533, 0], [484, 496, 500, 533, 1], [467, 480, 499, 506, 0],
  [461, 480, 487, 501, 1], [469, 487, 497, 504, 1], [437, 454, 497, 501, 0], [430, 444, 454, 464, 0],
  [430, 443, 459, 477, 1]
]
const prices = ['1.30880', '1.30790', '1.30700', '1.30610', '1.30520', '', '1.30340', '', '1.30160', '1.30070', '1.29980', '1.29890', '1.29800', '1.29710']
const priceY = [101, 135, 169, 202, 236, 270, 304, 337, 371, 405, 439, 472, 506, 540]
const times = ['22 Apr 2013', '22 Apr 09:00', '22 Apr 11:00', '22 Apr 13:00', '22 Apr 15:00', '22 Apr 17:00', '22 Apr 19:00', '22 Apr 21:00', '22 Apr 23:00',
  '23 Apr 01:00', '23 Apr 03:00', '23 Apr 05:00', '23 Apr 07:00', '23 Apr 09:00', '23 Apr 11:00', '23 Apr 13:00', '23 Apr 15:00']

const hline = (y, color, dash = 'none') =>
  `<path d="M208 ${y + 0.5}H1235" stroke="${color}" stroke-dasharray="${dash}"/>`
const text = (x, y, str, width, fill = '#fff') =>
  `<text x="${x}" y="${y}" textLength="${width}" lengthAdjust="spacingAndGlyphs" fill="${fill}">${str}</text>`

let out = '<defs><clipPath id="plot"><path d="M208 97h1027v447H208z"/></clipPath></defs><g clip-path="url(#plot)" fill="none">'
priceY.forEach(y => { out += hline(y, '#778899', '3 3') })
for (let x = 239; x < 1235; x += 32) {
  out += `<path d="M${x + 0.5} 97V544" stroke="#778899" stroke-dasharray="3 3"/>`
}
out += '<g shape-rendering="crispEdges">'
candles.forEach(([high, top, bottom, low, down], i) => {
  const x = 207 + i * 16
  const fill = down ? '#fff' : '#000'
  out += `<path d="M${x + 0.5} ${high}V${low + 1}" stroke="#20e020"/>`
  out += top === bottom
    ? `<path d="M${x - 5} ${top + 0.5}h11" stroke="#20e020"/>`
    : `<rect x="${x - 4.5}" y="${top + 0.5}" width="10" height="${bottom - top}" fill="${fill}" stroke="#20e020"/>`
})
out += '</g>'
out += hline(122, '#c81818', '9 6 3 6') + hline(505, '#c81818', '9 6 3 6') + hline(524, '#c81818', '9 6 3 6')
out += hline(227, '#409840', '9 6 3 6') + hline(373, '#409840', '9 6 3 6')
out += hline(229, '#e01818') + hline(271, '#e01818') + hline(340, '#778899')
out += '<path d="M1084 437.500h7" stroke="#000080"/></g>'

out += '<path d="M206.500 544V96.500H1235.500V544.500H206" fill="none" stroke="#fff"/>'
priceY.forEach((y, i) => {
  out += `<path d="M1236 ${y + 0.5}h3" stroke="#fff"/>`
  if (prices[i]) out += text(1241, y + 3, prices[i], 33)
})
const tag = (y, str, bg, fg) =>
  `<rect x="1238" y="${y - 6}" width="39" height="11" fill="${bg}"/>` + text(1241, y + 3, str, 33, fg)
out += tag(229, '1.30540', '#f00808', '#400000') + tag(271, '1.30426', '#f00808', '#400000') + tag(340, '1.30244', '#fff', '#000')
times.forEach((t, i) => {
  const x = 207 + i * 64
  if (i) out += `<path d="M${x + 0.5} 545v3" stroke="#fff"/>`
  out += text(i ? x - 1 : 205, 557, t, i ? 54 : 51)
})

out += '<path d="M210 102h8l-4 5z" fill="#fff"/>'
out += text(221, 108, 'EURUSD,M30', 60) + text(288, 108, '1.30193 1.30272 1.30135 1.30244', 141)
out += text(1144, 109, 'LondonBeat_v1.7', 73)
out += '<circle cx="1224.500" cy="106.500" r="5" fill="none" stroke="#fff"/><path d="M1222.500 104v2M1226.500 104v2M1221.500 107.500q3 4 6 0" fill="none" stroke="#fff"/>'
out += text(212, 225, '#603271271 buy stop', 91) + text(212, 371, '#603273701 buy', 70)
out += '<path d="M1081.500 171.500h3v-2l4 4-4 4v-2h-3z" fill="#2020d0" stroke="#fff"/><path d="M1088 173.500h3" stroke="#c02020"/>'
out += '<path d="M1081 326.500h3v-2.500l4.500 4.500-4.500 4.500v-2.500h-3z" fill="#e01010"/><path d="M1088 328.500h3" stroke="#c02020"/>'
out += '<path d="M207 540v4h5z" fill="#778899"/>'
document.querySelector('#chart').innerHTML = out
```
